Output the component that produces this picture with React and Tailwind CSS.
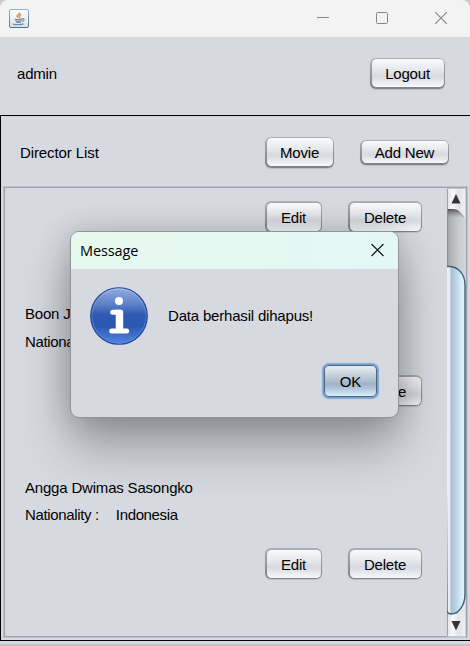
import React from "react";

function NimbusButton({ children, className = "" }) {
  return (
    <button
      className={`flex shrink-0 items-center justify-center rounded-[6px] bg-linear-to-b from-[#abaeb3] to-[#7d8188] p-[1.5px] shadow-[0_1px_1px_rgba(120,125,135,0.3)] ${className}`}
    >
      <span className="flex h-full w-full items-center justify-center rounded-[4.5px] bg-[linear-gradient(#fafafb_0%,#e6e8ec_38%,#d7d9df_60%,#dfe1e6_72%,#f7f9fc_100%)] pt-[3px]">
        {children}
      </span>
    </button>
  );
}

function JavaIcon() {
  return (
    <svg width="20" height="19" viewBox="0 0 20 19" fill="none">
      <defs>
        <linearGradient id="frame" x1="0" y1="0" x2="0" y2="1">
          <stop offset="0" stopColor="#93b1c7" />
          <stop offset="1" stopColor="#50708c" />
        </linearGradient>
        <linearGradient id="plate" x1="0" y1="0" x2="0" y2="1">
          <stop offset="0" stopColor="#ffffff" />
          <stop offset="1" stopColor="#dde0e4" />
        </linearGradient>
      </defs>
      <rect x=".5" y=".5" width="19" height="18" rx="1.5" fill="url(#plate)" stroke="url(#frame)" />
      <path d="M10.500 3.500c1 1.400-2.700 2.300-2.500 3.600.2.700 1 1.100 1.100 1.700M12 5.500c-2 .8-2 1.500-1.400 2.100.4.500.2.900-.3 1.300" stroke="#ea8a45" strokeWidth="1.500" />
      <path d="M5.500 9.900c1.500.5 6 .5 8 0M6.200 11.600c1.500.6 5 .6 6.500 0M7 13c1.500.4 4 .4 5.200 0M13.300 9.700c2.500-.3 2.300 2.300-.3 2.700M4 14.600c-1 1.300 9 1.400 10.500.2" stroke="#6b8ca8" strokeWidth="1.100" />
    </svg>
  );
}

function InfoIcon() {
  return (
    <svg width="58" height="58" viewBox="0 0 58 58">
      <defs>
        <linearGradient id="ball" x1="0" y1="0" x2="0" y2="1">
          <stop offset="0" stopColor="#91acdd" />
          <stop offset=".3" stopColor="#5c80c8" />
          <stop offset=".48" stopColor="#2e59b0" />
          <stop offset=".68" stopColor="#2b58b3" />
          <stop offset="1" stopColor="#5487e3" />
        </linearGradient>
        <linearGradient id="inner" x1="0" y1="0" x2="0" y2="1">
          <stop offset="0" stopColor="#a9c0e6" />
          <stop offset=".5" stopColor="#4772c3" />
          <stop offset="1" stopColor="#5b8be5" />
        </linearGradient>
      </defs>
      <circle cx="29" cy="29" r="28.300" fill="url(#ball)" stroke="#1f469a" strokeWidth="1.100" />
      <circle cx="29" cy="29" r="27" fill="none" stroke="url(#inner)" strokeWidth="1" />
      <circle cx="29" cy="14" r="4" fill="#fff" />
      <path d="M22.700 25.200h7.500M21.700 44h15" fill="none" stroke="#fff" strokeWidth="5" strokeLinecap="round" />
      <path d="M25 22.700h6a2.200 2.200 0 0 1 2.200 2.200V43H25.700V27.500z" fill="#fff" />
    </svg>
  );
}

function ScrollBar() {
  return (
    <svg className="shrink-0" width="19" height="449" viewBox="0 0 19 449">
      <defs>
        <linearGradient id="track" x1="0" y1="0" x2="1" y2="0">
          <stop offset="0" stopColor="#8f9094" />
          <stop offset=".12" stopColor="#aeafb3" />
          <stop offset=".6" stopColor="#c9cacd" />
          <stop offset="1" stopColor="#d3d5d9" />
        </linearGradient>
        <linearGradient id="trackTop" x1="0" y1="0" x2="0" y2="1">
          <stop offset="0" stopColor="#333" stopOpacity=".75" />
          <stop offset="1" stopColor="#777" stopOpacity="0" />
        </linearGradient>
        <linearGradient id="cap" x1="0" y1="0" x2="1" y2="0">
          <stop offset="0" stopColor="#e2e3e6" />
          <stop offset=".35" stopColor="#f8f8f9" />
          <stop offset=".65" stopColor="#e1e2e5" />
          <stop offset="1" stopColor="#eff0f2" />
        </linearGradient>
        <linearGradient id="thumb" x1="0" y1="0" x2="1" y2="0">
          <stop offset="0" stopColor="#b9cfe1" />
          <stop offset=".14" stopColor="#f0f6fa" />
          <stop offset=".24" stopColor="#dce7ef" />
          <stop offset=".31" stopColor="#a8bfd4" />
          <stop offset=".55" stopColor="#bdd2e5" />
          <stop offset=".8" stopColor="#d8ebf6" />
          <stop offset="1" stopColor="#e3f7fd" />
        </linearGradient>
      </defs>
      <rect width="19" height="449" fill="url(#track)" />
      <path d="M0 21H10L17 30H0z" fill="url(#trackTop)" />
      <path d="M0 0H18V31C16 25 12 21 5 21H0z" fill="url(#cap)" />
      <path d="M0 21.500H5C10 21.500 14 24.500 17 29.500" fill="none" stroke="#4e5054" strokeOpacity=".35" />
      <path d="M0 426H18V449H0z" fill="url(#cap)" />
      <path d="M17 405H18V430H10z" fill="#e5e7ea" />
      <path d="M-2 78.500H2C11 78.500 18 86 18 97V406C18 417 12 426 4 426C2 426 1 425.500 0 423.500z" fill="url(#thumb)" stroke="#3f5f7b" strokeWidth="1.400" />
      <path d="M.5 0V78M.5 426V449" stroke="#8d9096" strokeOpacity=".8" />
      <path d="M0 .5H19M0 448.500H19" stroke="#c2c5ca" />
      <path d="M9 6L13.500 15.500H4.500z" fill="#333436" />
      <path d="M4.500 433H13.500L9 442.500z" fill="#333436" />
    </svg>
  );
}

function RowActions() {
  return (
    <div className="flex gap-[26px] pl-[260px]">
      <NimbusButton className="h-[31px] w-[57px]">Edit</NimbusButton>
      <NimbusButton className="h-[31px] w-[74px]">Delete</NimbusButton>
    </div>
  );
}

function DirectorRow({ name, nationality, detailClass = "" }) {
  return (
    <li className="flex shrink-0 flex-col pt-[68px]">
      <div className="h-7 pl-[20px] leading-7">{name}</div>
      <div className={`mb-[19px] flex gap-[17px] pl-[20px] tracking-[-0.35px] ${detailClass}`}>
        <span>Nationality :</span>
        <span>{nationality}</span>
      </div>
      <RowActions />
    </li>
  );
}

function MessageDialog() {
  return (
    <div
      role="dialog"
      className="absolute top-[231px] left-[70px] flex h-[187px] w-[329px] flex-col overflow-hidden rounded-[9px] border border-[#929397] bg-[#d6d9e0] shadow-[0_30px_50px_rgba(0,0,0,0.28),0_2px_32px_rgba(0,0,0,0.2)]"
    >
      <div className="flex h-[37px] shrink-0 items-center justify-between bg-linear-to-r from-[#e7f9ef] to-[#e3f8f5] pr-[14px] pl-[9px]">
        <span className="font-['Open_Sans','Noto_Sans',sans-serif] text-[14.5px] tracking-[-0.1px]">Message</span>
        <svg width="13" height="13" viewBox="0 0 13 13">
          <path d="M.5 0l12 12M12.500 0l-12 12" stroke="#111" strokeWidth="1.200" />
        </svg>
      </div>
      <div className="flex items-center gap-[20px] pt-[18px] pl-[19px]">
        <InfoIcon />
        <span>Data berhasil dihapus!</span>
      </div>
      <div className="mt-[20px] flex justify-end pr-[21px]">
        <button className="h-[32px] w-[53px] rounded-[5px] border border-[#50657c] bg-[linear-gradient(#e9eef3_0%,#b9c8d6_40%,#9fb3c8_60%,#b0c5d8_75%,#dbeefb_100%)] pt-[2px] shadow-[0_0_0_1.5px_#73a4d1,0_0_1px_2px_#8fb4da]">
          OK
        </button>
      </div>
    </div>
  );
}

export default function App() {
  return (
    <div className="relative flex h-[646px] w-[470px] flex-col overflow-hidden bg-[#d6d9e0] font-['Liberation_Sans',Arial,sans-serif] text-[15px] tracking-[-0.19px] text-black">
      <div className="h-[37px] shrink-0 bg-[#c9cacc]">
        <header className="flex h-full items-center justify-between rounded-t-[8px] bg-[#f3f3f3] pr-[23px] pb-px pl-[9px]">
          <JavaIcon />
          <div className="flex items-center gap-[47px]">
            <svg width="12" height="12" viewBox="0 0 12 12">
              <path d="M0 5.500h12" stroke="#8b8b8b" />
            </svg>
            <svg width="12" height="12" viewBox="0 0 12 12">
              <rect x=".5" y=".5" width="11" height="11" rx="1" fill="none" stroke="#858585" />
            </svg>
            <svg width="12" height="12" viewBox="0 0 12 12">
              <path d="M0 0l12 12M12 0L0 12" stroke="#858585" strokeWidth="1.100" />
            </svg>
          </div>
        </header>
      </div>

      <div className="flex h-[78px] shrink-0 items-center justify-between pr-[25px] pb-[6px] pl-[17px]">
        <span className="pt-[2px]">admin</span>
        <NimbusButton className="h-[31px] w-[75px]">Logout</NimbusButton>
      </div>

      <main className="flex h-[526px] shrink-0 flex-col border-y border-l border-black pl-[2px]">
        <div className="flex h-[70px] shrink-0 items-center pt-[2px] pr-[21px] pl-[17px]">
          <span className="flex-1 pt-[2px] tracking-[-0.1px]">Director List</span>
          <NimbusButton className="mr-[26px] h-[31px] w-[69px]">Movie</NimbusButton>
          <NimbusButton className="h-[25px] w-[89px]">Add New</NimbusButton>
        </div>
        <div className="h-[452px] w-[465px] border border-[#c0c3ca]">
          <div className="flex h-full w-full border border-[#9fa3ac]">
            <ul className="flex w-[442px] flex-col overflow-hidden pt-[13px]">
              <li>
                <RowActions />
              </li>
              <DirectorRow name="Boon Joon Ho" nationality="South Korea" detailClass="h-7 leading-7" />
              <DirectorRow name="Angga Dwimas Sasongko" nationality="Indonesia" detailClass="h-[27px] leading-[26px]" />
            </ul>
            <ScrollBar />
          </div>
        </div>
      </main>
      <footer className="mt-[3px] h-[2px] shrink-0 bg-[#c3c4cb]" />

      <MessageDialog />
    </div>
  );
}
